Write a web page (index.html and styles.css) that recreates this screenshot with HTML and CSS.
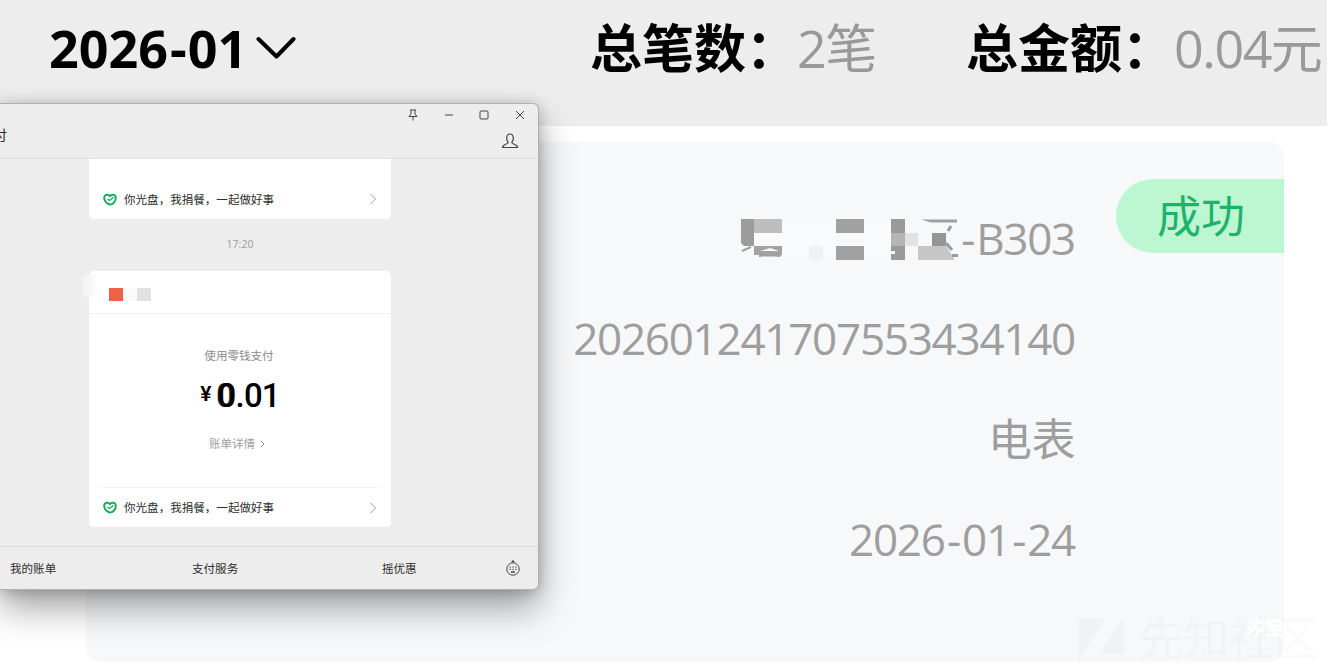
FILE: index.html
```html
<!DOCTYPE html>
<html lang="zh-CN">
<head>
    <meta charset="UTF-8">
    <meta name="viewport" content="width=device-width, initial-scale=1.0">
    <title>缴费记录</title>
    <link rel="stylesheet" href="styles.css">
</head>
<body>
    <header class="summary">
        <div class="month">
            <span>2026<span class="dash">-</span>01</span>
            <svg class="month-arrow" width="40" height="24" viewBox="0 0 40 24"><path d="M2.500 3 L20.500 20.500 L37.500 3" fill="none" stroke="#000" stroke-width="4" stroke-linecap="round" stroke-linejoin="round"/></svg>
        </div>
        <div class="total total-count"><b>总笔数：</b><span>2笔</span></div>
        <div class="total total-amount"><b>总金额：</b><span>0.04元</span></div>
    </header>

    <main class="record">
        <div class="details">
            <div class="row">
                <svg class="mosaic" width="218" height="46" viewBox="0 0 218 46">
                    <path fill="#fcfcfc" d="M14 14h28v14H14zM42 0h53v41H42zM123 0h27v41h-27z" opacity=".6"/>
                    <path fill="#9c9c9c" d="M0 0h13v27H3L0 24z"/>
                    <path fill="#bebebe" d="M13 0h28v14H13z"/>
                    <path fill="#a2a2a2" d="M13 27h28v9H13z"/>
                    <path fill="none" stroke="#a0a0a0" stroke-width="2" d="M1 32l9-4M19 32v6M37 32v6M18 36.500h22"/>
                    <path fill="#fcfcfc" d="M19 32l10-3 9 3z"/>
                    <path fill="#f1f1f2" d="M68 27h14v14H68z"/>
                    <path fill="#a1a1a1" d="M95 0h28v14H95zM95 27h28v14H95zM150 0h14v14h-14z"/>
                    <path fill="#9a9a9a" d="M150 0h14v41h-14v-6h4v-3h-4z"/>
                    <path fill="#b5b5b5" d="M150 14h14v13h-14z"/>
                    <path fill="#e2e2e3" d="M164 14h13v13h-13z"/>
                    <path fill="#a0a0a0" d="M180 .5h36v3h-26z"/>
                    <path fill="#969696" d="M191 14h14v13h-14z"/>
                    <path fill="#c6c6c6" d="M177 27h28l8 12v2h-36z"/>
                    <path fill="none" stroke="#9c9c9c" stroke-width="3" d="M210 7l-3 5M205 24l6 7M211 36.500h6"/>
                </svg>
                <span><span class="dash">-</span>B303</span>
            </div>
            <div class="row">202601241707553434140</div>
            <div class="row row-type">电表</div>
            <div class="row"><span>2026<span class="dash">-</span>01<span class="dash">-</span>24</span></div>
        </div>
        <div class="status">成功</div>
    </main>

    <div class="watermark">
        <svg width="50" height="44" viewBox="0 0 50 44"><path fill="currentColor" d="M0 2h26L0 44zM45 0v38H20z"/></svg>
        <span>先知社区</span>
        <svg class="watermark-mark" width="38" height="20" viewBox="0 0 38 20"><path fill="none" stroke="#fff" stroke-width="3" d="M3 3l3 3M1 9l4 2M2 17l5-6M7 6l10-2M12 1l-4 11M9 9l9 5M17 8l-8 10M22 3h13v5H22zM22 12h14M29 8v9M20 17h17"/></svg>
    </div>

    <div class="window">
        <div class="window-head">
            <div class="window-controls">
                <svg width="12" height="12" viewBox="0 0 12 12"><path d="M3 1h6M4 1v4L2 7.500h8L8 5V1M6 7.500V11.500"/></svg>
                <svg width="12" height="12" viewBox="0 0 12 12"><path d="M2 6h8"/></svg>
                <svg width="12" height="12" viewBox="0 0 12 12"><rect x="2" y="2" width="8" height="8" rx="1"/></svg>
                <svg width="12" height="12" viewBox="0 0 12 12"><path d="M2 2l8 8M10 2l-8 8"/></svg>
            </div>
            <div class="window-title">
                <span>付</span>
                <svg width="18" height="18" viewBox="0 0 18 18"><path d="M7.200 10.500C5.200 8.300 4.800 2 9 2s3.800 6.300 1.800 8.500c-.4 1.500 5.700 1.800 5.700 5h-15c0-3.200 6.100-3.500 5.700-5z"/></svg>
            </div>
        </div>

        <div class="chat">
            <div class="pay-card pay-card-first">
                <div class="donate">
                    <svg class="heart" width="14" height="13" viewBox="0 0 14 13"><path d="M6.500 11.500C3.500 10.500 1 7.500 1.200 4.300 1.500 1.500 5 .8 7 3c2-2.200 5.600-1.500 5.800 1.300.1 3.700-2.300 7.200-6.300 7.200z"/><path d="M4.500 6l2 1.500 4-3.200"/></svg>
                    <span>你光盘，我捐餐，一起做好事</span>
                    <svg class="arrow" width="8" height="12" viewBox="0 0 8 12"><path d="M1.500 1l5 5-5 5"/></svg>
                </div>
            </div>
            <div class="time">17:20</div>
            <div class="pay-card">
                <div class="merchant">
                    <i class="avatar-blur"></i>
                    <i class="block block-red"></i>
                    <i class="block block-light"></i>
                    <i class="block block-grey"></i>
                </div>
                <div class="payment">
                    <p class="method">使用零钱支付</p>
                    <p class="amount"><small>¥</small><span class="first-digit">0</span>.01</p>
                    <p class="bill-link">账单详情<svg width="6" height="8" viewBox="0 0 6 8"><path d="M1 1l3 3-3 3"/></svg></p>
                </div>
                <div class="donate donate-line">
                    <svg class="heart" width="14" height="13" viewBox="0 0 14 13"><path d="M6.500 11.500C3.500 10.500 1 7.500 1.200 4.300 1.500 1.500 5 .8 7 3c2-2.200 5.600-1.500 5.800 1.300.1 3.700-2.300 7.200-6.300 7.200z"/><path d="M4.500 6l2 1.500 4-3.200"/></svg>
                    <span>你光盘，我捐餐，一起做好事</span>
                    <svg class="arrow" width="8" height="12" viewBox="0 0 8 12"><path d="M1.500 1l5 5-5 5"/></svg>
                </div>
            </div>
        </div>

        <div class="menu">
            <span class="menu-bill">我的账单</span>
            <span class="menu-service">支付服务</span>
            <span class="menu-offer">摇优惠</span>
            <svg width="16" height="18" viewBox="0 0 16 18"><circle cx="8" cy="10" r="6.200"/><path d="M8 1v2.500M6.500 2.500h3"/><path d="M4.500 8h7M4.500 10.300h7" stroke-dasharray="1.400 1.400"/><path d="M6 13h4" stroke-width="1.500"/></svg>
        </div>
    </div>
</body>
</html>
```
FILE: styles.css
```css
* {
    box-sizing: border-box;
}
body {
    position: relative;
    width: 1339px;
    height: 671px;
    margin: 0;
    overflow: hidden;
    background: #fff;
    font-family: "Open Sans", "Noto Sans CJK SC", sans-serif;
}
svg {
    flex: none;
}
p {
    margin: 0;
}

/* top summary */
.summary {
    display: flex;
    width: 1327px;
    height: 126px;
    padding-left: 49px;
    background: #ededed;
    font-size: 52px;
    line-height: 96px;
    white-space: nowrap;
}
.month {
    display: flex;
    width: 541px;
    font-weight: 700;
}
.month .dash {
    padding: 0 1px 0 2px;
}
.month-arrow {
    margin: 36px 0 0 9px;
}
.total {
    display: flex;
    color: #999;
}
.total b {
    width: 207px;
    color: #000;
}
.total-count {
    width: 376px;
}
.total span {
    letter-spacing: -1.5px;
}
.total-amount span {
    margin-left: 1px;
}

/* record card */
.record {
    display: flex;
    width: 1198px;
    height: 520px;
    margin: 16px 0 0 86px;
    border-radius: 16px;
    background: #f6f8fa;
}
.details {
    width: 989px;
    padding-top: 46px;
    color: #9e9e9e;
    font-size: 44px;
    letter-spacing: -1.26px;
}
.row {
    display: flex;
    justify-content: flex-end;
    height: 100.3px;
    line-height: 100px;
}
.row-type {
    letter-spacing: -0.5px;
}
.row .dash {
    padding: 0 2px 0 2.5px;
}
.mosaic {
    margin-top: 31px;
}
.status {
    width: 168px;
    height: 74px;
    margin: 37px 0 0 auto;
    padding-left: 41px;
    border-radius: 37px 0 0 37px;
    background: #bdf7d2;
    color: #1db36b;
    font-size: 44px;
    line-height: 74px;
}

/* watermark over the lower right corner */
.watermark {
    position: absolute;
    left: 1079px;
    top: 616px;
    display: flex;
    gap: 9px;
    color: rgba(110, 110, 110, 0.04);
    font-size: 46px;
    line-height: 42px;
    letter-spacing: -1px;
}
.watermark-mark {
    position: absolute;
    left: 167px;
    top: 2px;
}

/* chat window */
.window {
    position: absolute;
    left: 0;
    top: 103px;
    display: flex;
    flex-direction: column;
    width: 539px;
    height: 487px;
    overflow: hidden;
    border: 1px solid #b0b0b0;
    border-left: 0;
    border-radius: 0 6px 6px 0;
    background: #ededed;
    box-shadow: 0 18px 36px rgba(0, 0, 0, 0.36), 0 2px 14px rgba(0, 0, 0, 0.2);
    color: #2e2e2e;
    font-size: 11.55px;
}
.window svg {
    fill: none;
    stroke: #444;
    stroke-width: 1;
}
.window-head {
    height: 55px;
    border-bottom: 1px solid #e1e1e1;
}
.window-controls {
    display: flex;
    justify-content: flex-end;
    gap: 23.6px;
    padding: 5px 12px 0 0;
}
.window-title {
    display: flex;
    justify-content: space-between;
    height: 28px;
    padding-right: 19px;
    font-size: 14px;
    line-height: 28px;
}
.window-title span {
    margin-left: -7px;
}
.window-title svg {
    margin-top: 11px;
    stroke-width: 1.2;
}
.chat {
    flex: 1;
    padding-left: 89px;
}
.pay-card {
    width: 302px;
    border-radius: 5px;
    background: #fff;
}
.pay-card-first {
    height: 60px;
    padding-top: 20px;
    border-radius: 0 0 5px 5px;
}
.donate {
    display: flex;
    align-items: center;
    height: 40px;
    margin: 0 14px;
}
.donate span {
    margin: -1px 0 0 7px;
}
.donate .arrow {
    margin-left: auto;
    stroke: #999;
}
.donate .heart {
    stroke: #12ad56;
    stroke-width: 2;
}
.donate .heart path + path {
    stroke-width: 1.3;
}
.donate-line {
    border-top: 1px solid #f0f0f0;
}
.time {
    width: 302px;
    height: 52px;
    color: #9c9c9c;
    font-size: 10.5px;
    line-height: 50px;
    text-align: center;
}
.merchant {
    position: relative;
    display: flex;
    height: 43px;
    padding: 17px 0 0 20px;
    border-bottom: 1px solid #f1f1f1;
}
.avatar-blur {
    position: absolute;
    left: -7px;
    top: 3px;
    width: 14px;
    height: 23px;
    background: linear-gradient(90deg, #f1f1f1, #fcfcfc);
}
.block {
    width: 14px;
    height: 13px;
}
.block-red {
    background: #ef6145;
}
.block-light {
    background: #fafafa;
}
.block-grey {
    background: #e1e1e1;
}
.payment {
    height: 173px;
    padding-top: 32px;
    text-align: center;
}
.method {
    padding-right: 2px;
    color: #8c8c8c;
    line-height: 20px;
}
.amount {
    height: 56px;
    color: #000;
    font-family: Roboto, sans-serif;
    font-size: 33px;
    font-weight: 500;
    line-height: 57px;
    letter-spacing: -0.8px;
}
.amount small {
    margin-right: 7px;
    font-size: 21px;
    font-weight: 600;
    vertical-align: 6px;
}
.first-digit {
    text-shadow: -1.5px 0 #222;
}
.bill-link {
    padding-right: 5px;
    color: #9f9f9f;
    line-height: 44px;
}
.bill-link svg {
    margin-left: 5px;
    stroke: #888;
}
.menu {
    display: flex;
    align-items: center;
    height: 43px;
    padding-left: 10px;
    border-top: 1px solid #dadada;
}
.menu-bill {
    width: 182px;
}
.menu-service {
    width: 190px;
}
.menu-offer {
    width: 123px;
}
```
